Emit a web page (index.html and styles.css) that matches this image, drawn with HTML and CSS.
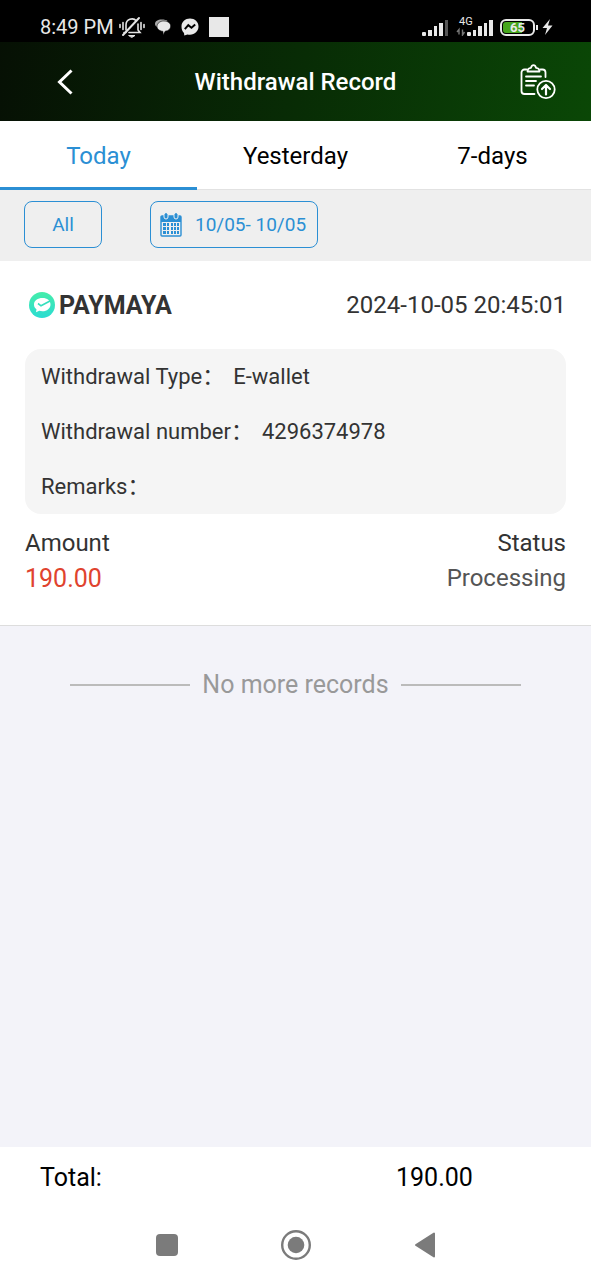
FILE: index.html
```html
<!DOCTYPE html>
<html lang="en">
<head>
<meta charset="utf-8">
<meta name="viewport" content="width=device-width, initial-scale=1">
<title>Withdrawal Record</title>
<link rel="stylesheet" href="styles.css">
</head>
<body>
<div class="screen">
  <div class="status-bar">
    <div class="status-left">
      <span class="clock">8:49 PM</span>
      <svg class="icon-mute" width="26" height="22" viewBox="0 0 26 22" fill="none" stroke="#e4e4e4" stroke-width="1.6" stroke-linecap="round">
        <path d="M1 8.500v3M4 6.500v7M25 8.500v3M22 6.500v7"/>
        <path d="M7 14V9a6 6 0 0 1 10.500-4M19 8v6l2 2.500H10M5 16.500h2"/>
        <path d="M4 19 20 2" stroke-width="2"/>
        <path d="M10 19.500h6l-3 1.800z" fill="#e4e4e4" stroke-width="1"/>
      </svg>
      <svg class="icon-chat" width="16" height="17" viewBox="0 0 16 17">
        <path d="M0 5C0 2 3 .500 6.500.500c3 0 5 .500 6 1.500L3 8.500C1 7.500 0 6.500 0 5z" fill="#aaa"/>
        <path d="M8.800 2c3.800 0 6.900 2 6.900 5s-2 4.800-5.500 5.200L8 16v-3.600C4.500 12 2 10 2 7.500 2 4 5.200 2 8.800 2z" fill="#e8e8e8" stroke="#000" stroke-width=".6"/>
      </svg>
      <svg class="icon-messenger" width="18" height="18" viewBox="0 0 18 18">
        <path d="M9 .5c4.800 0 8.500 3.400 8.500 8S13.800 16.700 9 16.700c-.9 0-1.700-.1-2.500-.3L3.300 17.500 3 15C1.400 13.400.5 11.200.5 8.500c0-4.600 3.700-8 8.500-8z" fill="#e8e8e8"/>
        <path d="m3.800 11.200 3.500-4 3.200 2.600 3.700-3.200" fill="none" stroke="#000" stroke-width="2"/>
      </svg>
      <span class="notice-square"></span>
    </div>
    <div class="status-right">
      <svg width="27" height="17" viewBox="0 0 27 17" fill="#e8e8e8">
        <rect x="0" y="13" width="4" height="4" rx="1"/><rect x="6" y="11" width="4" height="6"/><rect x="12" y="7" width="3" height="10"/><rect x="17" y="4" width="4" height="13"/><rect x="23" y="1" width="3" height="16" fill="#555"/>
      </svg>
      <div class="mobile-data">
        <svg width="37" height="17" viewBox="0 0 37 17" fill="#e8e8e8">
          <path d="M1 13l2-2.500v5M6.500 10.500v5.500L8.500 13" fill="none" stroke="#777" stroke-width="1.400"/>
          <rect x="11" y="13" width="4" height="4" rx="1"/><rect x="17" y="11" width="3" height="6"/><rect x="22" y="7" width="4" height="10"/><rect x="28" y="4" width="3" height="13"/><rect x="33" y="1" width="4" height="16"/>
        </svg>
        <span class="network">4G</span>
      </div>
      <span class="battery">65</span>
      <svg class="bolt" width="11" height="16" viewBox="0 0 11 16"><path d="M8 0 .5 9H5l-2 7 7.500-9.500H6z" fill="#e8e8e8"/></svg>
    </div>
  </div>

  <header class="title-bar">
    <button class="icon-button" aria-label="Back">
      <svg width="16" height="26" viewBox="0 0 16 26" fill="none" stroke="#fff" stroke-width="3"><path d="M14.500 1.500 2.500 13l12 11.500"/></svg>
    </button>
    <h1>Withdrawal Record</h1>
    <button class="icon-button" aria-label="Submit record">
      <svg width="36" height="36" viewBox="0 0 36 36" fill="none" stroke="#fff" stroke-width="1.800" stroke-linecap="round" stroke-linejoin="round">
        <path d="M6.500 5.500H4.500A3 3 0 0 0 1.500 8.500v18.500a3 3 0 0 0 3 3h10M20.500 5.500H22.500a3 3 0 0 1 3 3v4.500"/>
        <path d="M7.500 7.500c0-2.500 1-3.500 3.500-3.700C11.500 2 12.300 1.200 13.500 1.200S15.500 2 16 3.800c2.500.2 3.500 1.200 3.500 3.700z"/>
        <path d="M6 12.500h15M6 17h10M6 21.500h8"/>
        <circle cx="26" cy="25.500" r="8.700"/>
        <path d="M26 30.500v-9M22 25l4-4 4 4" stroke-width="2.200"/>
      </svg>
    </button>
  </header>

  <nav class="tabs">
    <button class="tab tab-active">Today</button>
    <button class="tab">Yesterday</button>
    <button class="tab">7-days</button>
  </nav>

  <div class="filters">
    <button class="filter filter-all">All</button>
    <button class="filter filter-date">
      <svg width="22" height="24" viewBox="0 0 22 24">
        <rect x="1" y="3" width="20" height="20" rx="1" fill="none" stroke="#2b8fd4" stroke-width="1.400"/>
        <path d="M1 3h20v6H1z" fill="#2b8fd4"/>
        <path d="M4 1v3a2 2 0 0 0 4 0V1M14 1v3a2 2 0 0 0 4 0V1" fill="#2b8fd4" stroke="#efefef"/>
        <rect x="5" y="0" width="2" height="5" rx="1" fill="#2b8fd4"/><rect x="15" y="0" width="2" height="5" rx="1" fill="#2b8fd4"/>
        <path d="M7 10h2v3H7zM11 10h2v3h-2zM14 10h2v3h-2zM17 10h2v3h-2zM3 14h3v3H3zM7 14h2v3H7zM11 14h2v3h-2zM14 14h2v3h-2zM17 14h2v3h-2zM3 18h3v3H3zM7 18h2v3H7zM11 18h2v3h-2zM14 18h2v3h-2zM17 18h2v3h-2zM3 10h3v3H3z" fill="#2b8fd4"/>
      </svg>
      <span>10/05- 10/05</span>
    </button>
  </div>

  <main class="records">
    <article class="record">
      <div class="record-head">
        <h2 class="provider">
          <svg width="26" height="26" viewBox="0 0 26 26">
            <defs><linearGradient id="mint" x1="0" y1="0" x2="0" y2="1"><stop offset="0" stop-color="#45edaa"/><stop offset="1" stop-color="#2bdcd2"/></linearGradient></defs>
            <circle cx="13" cy="13" r="13" fill="url(#mint)"/>
            <path d="M13.500 6c4.700 0 8 2.600 8 6.500s-3.500 6.800-8 6.800c-1.200 0-2.300-.2-3.200-.5L7 20.300l.5-3C5.800 16 5 14.500 5 12.500 5 8.600 8.800 6 13.500 6z" fill="#fff"/>
            <path d="m9 11.500 3 2.300 9-4.800" fill="none" stroke="#35dfbd" stroke-width="1.600"/>
          </svg>
          <span>PAYMAYA</span>
        </h2>
        <time datetime="2024-10-05T20:45:01">2024-10-05 20:45:01</time>
      </div>
      <dl class="details">
        <div class="detail"><dt>Withdrawal Type：</dt><dd>E-wallet</dd></div>
        <div class="detail"><dt>Withdrawal number：</dt><dd>4296374978</dd></div>
        <div class="detail"><dt>Remarks：</dt><dd></dd></div>
      </dl>
      <div class="summary">
        <div><div>Amount</div><div class="amount">190.00</div></div>
        <div class="summary-status"><div>Status</div><div class="state">Processing</div></div>
      </div>
    </article>
    <p class="list-end">No more records</p>
  </main>

  <footer class="total"><span>Total:</span><span>190.00</span></footer>

  <nav class="system-nav">
    <button class="icon-button" aria-label="Recent apps"><svg width="22" height="22" viewBox="0 0 22 22"><rect width="22" height="22" rx="4" fill="#7b7b7b"/></svg></button>
    <button class="icon-button" aria-label="Home"><svg width="30" height="30" viewBox="0 0 30 30"><circle cx="15" cy="15" r="13.800" fill="none" stroke="#7b7b7b" stroke-width="2.400"/><circle cx="15" cy="15" r="8.300" fill="#7b7b7b"/></svg></button>
    <button class="icon-button" aria-label="Go back"><svg width="22" height="26" viewBox="0 0 22 26"><path d="M20 1.500v23L2 13z" fill="#7b7b7b" stroke="#7b7b7b" stroke-width="2" stroke-linejoin="round"/></svg></button>
  </nav>
</div>
</body>
</html>
```
FILE: styles.css
```css
* { box-sizing: border-box; }

body {
  margin: 0;
  font-family: Roboto, "Noto Sans CJK SC", sans-serif;
  font-size: 22px;
  color: #333;
}

h1, h2, p, dl, dd { margin: 0; }
svg { display: block; flex: none; }
button { font-family: inherit; cursor: pointer; }

.screen {
  display: flex;
  flex-direction: column;
  min-height: 100vh;
  background: #f3f3f9;
}

.status-bar {
  display: flex;
  justify-content: space-between;
  height: 42px;
  padding: 12px 38px 0 40px;
  background: #000;
  color: #e8e8e8;
}

.status-left, .status-right {
  display: flex;
  align-items: center;
  height: 30px;
}
.status-left { gap: 10px; }
.status-right { gap: 7px; }
.clock { font-size: 20px; margin-right: -5px; }
.notice-square { width: 20px; height: 20px; background: #e8e8e8; }

.mobile-data { position: relative; }
.network {
  position: absolute;
  left: 3px;
  top: -3px;
  font-size: 11px;
  line-height: 12px;
}

.battery {
  position: relative;
  width: 35px;
  height: 17px;
  border: 2px solid #e8e8e8;
  border-radius: 6px;
  background: linear-gradient(90deg, #46a51c 65%, transparent 65%) content-box;
  padding: 1px;
  font-size: 13px;
  font-weight: 700;
  line-height: 11px;
  text-align: center;
}
.battery::after {
  content: "";
  position: absolute;
  right: -5px;
  top: 4px;
  width: 2px;
  height: 5px;
  background: #e8e8e8;
}

.icon-button {
  display: grid;
  place-items: center;
  padding: 0;
  border: 0;
  background: none;
}

.title-bar {
  display: grid;
  grid-template-columns: 60px 1fr 60px;
  align-items: center;
  height: 79px;
  padding: 0 35px;
  background: linear-gradient(100deg, #061004, #0a4706);
}
.title-bar .icon-button:last-child { justify-content: end; }
.title-bar h1 {
  color: #fff;
  font-size: 24px;
  font-weight: 500;
  text-align: center;
}

.tabs {
  display: grid;
  grid-template-columns: repeat(3, 1fr);
  height: 69px;
  background: #fff;
}
.tab {
  padding: 2px 0 0;
  border: 0;
  border-bottom: 1px solid #e2e2e2;
  background: none;
  color: #000;
  font-size: 24px;
}
.tab-active {
  padding-top: 4px;
  border-bottom: 3px solid #2b8fd4;
  color: #2b8fd4;
}

.filters {
  display: flex;
  gap: 48px;
  padding: 11px 24px 13px;
  background: #efefef;
}
.filter {
  display: flex;
  align-items: center;
  justify-content: center;
  height: 47px;
  border: 1px solid #2b8fd4;
  border-radius: 8px;
  background: none;
  color: #2b8fd4;
  font-size: 19px;
}
.filter-all { width: 78px; }
.filter-date { gap: 13px; padding: 0 11px 0 9px; }

.records { flex: 1; }

.record {
  padding: 25px 25px 29px;
  border-bottom: 1px solid #ddd;
  background: #fff;
}
.record-head {
  display: flex;
  align-items: center;
  justify-content: space-between;
  height: 38px;
  margin-bottom: 25px;
}
.record-head time { font-size: 24px; }
.provider {
  display: flex;
  align-items: center;
  gap: 4px;
  padding-left: 4px;
  font-size: 25px;
  font-weight: 700;
}

.details {
  padding: 0 16px;
  border-radius: 16px;
  background: #f5f5f5;
  line-height: 30px;
}
.detail {
  display: flex;
  align-items: center;
  gap: 9px;
  height: 55px;
}

.summary {
  display: flex;
  justify-content: space-between;
  padding-top: 12px;
  font-size: 24px;
  line-height: 35px;
}
.summary-status { text-align: right; }
.amount { color: #e0432e; font-size: 25px; }
.state { color: #555; }

.list-end {
  display: flex;
  align-items: center;
  justify-content: center;
  gap: 12px;
  padding-top: 44px;
  color: #999;
  font-size: 25px;
  line-height: 30px;
}
.list-end::before,
.list-end::after {
  content: "";
  width: 120px;
  height: 2px;
  background: #bbb;
}

.total {
  display: grid;
  grid-template-columns: 356px 1fr;
  padding: 16px 40px;
  background: #fff;
  color: #000;
  font-size: 25px;
  line-height: 30px;
}

.system-nav {
  display: flex;
  align-items: center;
  justify-content: center;
  gap: 103px;
  height: 71px;
  background: #fff;
}
```
